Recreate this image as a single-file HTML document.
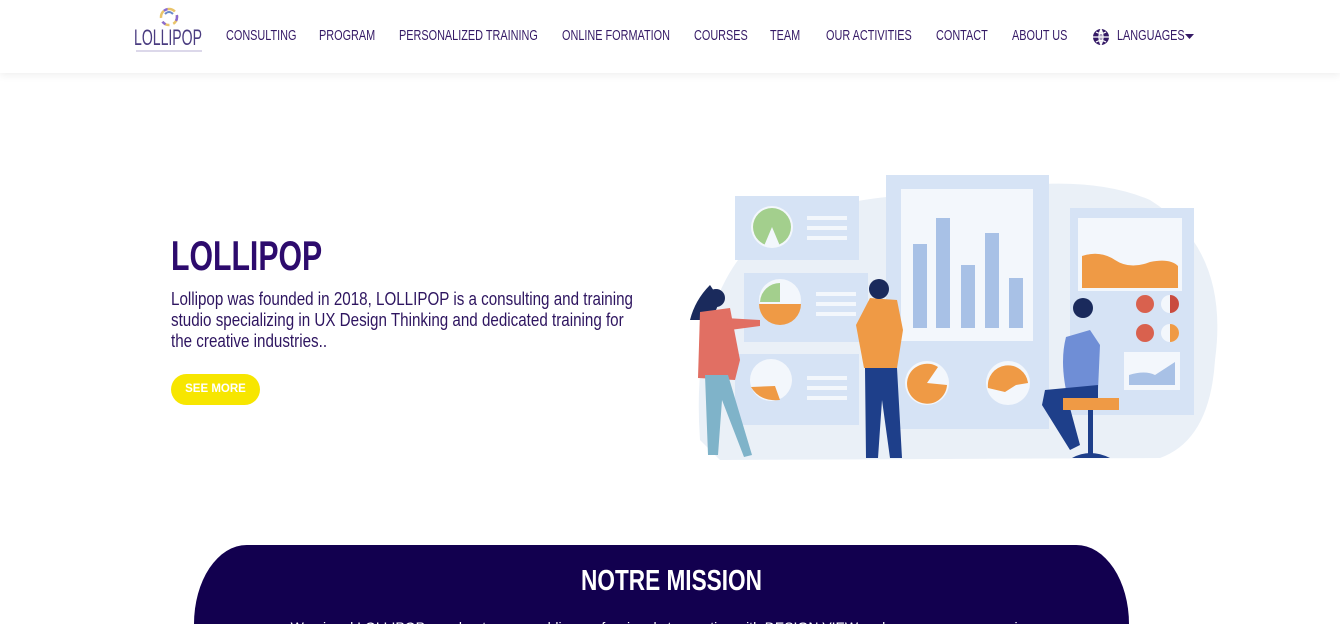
<!DOCTYPE html>
<html><head><meta charset="utf-8"><style>
*{margin:0;padding:0;box-sizing:border-box}
html,body{width:1340px;height:624px;overflow:hidden}
body{background:#fff;font-family:"Liberation Sans",sans-serif;position:relative}
.hdr{position:absolute;left:0;top:0;width:1340px;height:73px;background:#fff;box-shadow:0 2px 8px rgba(0,0,0,0.07);z-index:2}
.nav{position:absolute;top:28px;font-size:14.5px;color:#351a66;white-space:nowrap;transform:scaleX(0.75);transform-origin:0 0}
h1{position:absolute;left:171px;top:232px;font-size:42px;font-weight:bold;color:#2d0b6d;transform:scaleX(0.72);transform-origin:0 0;white-space:nowrap}
p.t{position:absolute;left:171px;top:289px;font-size:18px;line-height:21px;color:#2e1560;white-space:nowrap;transform:scaleX(0.843);transform-origin:0 0}
.btn{position:absolute;left:171px;top:374px;width:89px;height:31px;border-radius:16px;background:#f7e600;color:#fff;font-size:11.5px;font-weight:bold;text-align:center;line-height:31px}
.mis{position:absolute;left:194px;top:545px;width:935px;height:79px;overflow:hidden;background:#12004f;border-top-left-radius:80px 120px;border-top-right-radius:80px 120px}
.mis h2{position:absolute;left:10px;width:100%;text-align:center;top:20px;color:#fff;font-size:29px;font-weight:bold;transform:scaleX(0.78)}
.mis div{position:absolute;left:0;width:100%;text-align:center;top:74px;color:#fff;font-size:14px}
</style></head><body>
<div class="hdr">
 <svg style="position:absolute;left:130px;top:2px" width="80" height="52" viewBox="0 0 80 52">
  <circle cx="39" cy="15" r="8" fill="none" stroke="#e9c46a" stroke-width="2.5" stroke-dasharray="8 4"/>
  <circle cx="39" cy="15" r="8" fill="none" stroke="#8a6bd1" stroke-width="2.5" stroke-dasharray="4 12"/>
  <path d="M35 12 q4 -4 8 0" stroke="#6b8ac9" stroke-width="2" fill="none"/>
  <text x="4" y="43" font-family="Liberation Sans,sans-serif" font-size="22" fill="#4a3c80" textLength="68" lengthAdjust="spacingAndGlyphs">LOLLIPOP</text>
  <line x1="6" y1="49" x2="72" y2="49" stroke="#b9b0d6" stroke-width="1"/>
 </svg>
 <span class="nav" style="left:226px">CONSULTING</span>
 <span class="nav" style="left:319px">PROGRAM</span>
 <span class="nav" style="left:399px">PERSONALIZED TRAINING</span>
 <span class="nav" style="left:562px">ONLINE FORMATION</span>
 <span class="nav" style="left:694px">COURSES</span>
 <span class="nav" style="left:770px">TEAM</span>
 <span class="nav" style="left:826px">OUR ACTIVITIES</span>
 <span class="nav" style="left:936px">CONTACT</span>
 <span class="nav" style="left:1012px">ABOUT US</span>
 <svg style="position:absolute;left:1092px;top:28px" width="18" height="18" viewBox="0 0 18 18"><circle cx="9" cy="9" r="8" fill="#351a66"/><path d="M1 9h16M9 1v16M4 4q5 3 10 0M4 14q5-3 10 0M9 1q-4 8 0 16M9 1q4 8 0 16" stroke="#fff" stroke-width="1.2" fill="none"/></svg>
 <span class="nav" style="left:1117px">LANGUAGES</span>
 <svg style="position:absolute;left:1185px;top:34px" width="10" height="6"><path d="M0 0h9l-4.5 5z" fill="#351a66"/></svg>
</div>

<h1>LOLLIPOP</h1>
<p class="t">Lollipop was founded in 2018, LOLLIPOP is a consulting and training<br>studio specializing in UX Design Thinking and dedicated training for<br>the creative industries..</p>
<div class="btn">SEE MORE</div>

<svg style="position:absolute;left:680px;top:170px" width="540" height="295" viewBox="680 170 540 295">
 <path d="M700 440 Q690 300 760 235 Q840 190 960 195 Q1080 170 1150 200 Q1230 250 1215 360 Q1210 440 1160 458 L720 460 Z" fill="#eaf0f7"/>
 <rect x="886" y="175" width="163" height="254" fill="#d6e3f5"/>
 <rect x="901" y="189" width="132" height="152" fill="#f3f7fc"/>
 <g fill="#a8c1e6"><rect x="913" y="244" width="14" height="84"/><rect x="936" y="218" width="14" height="110"/><rect x="961" y="265" width="14" height="63"/><rect x="985" y="233" width="14" height="95"/><rect x="1009" y="278" width="14" height="50"/></g>
 <rect x="735" y="196" width="124" height="64" fill="#d6e3f5"/>
 <rect x="744" y="273" width="124" height="69" fill="#d6e3f5"/>
 <rect x="735" y="354" width="124" height="71" fill="#d6e3f5"/>
 <g fill="#f3f7fc"><rect x="807" y="216" width="40" height="4"/><rect x="807" y="226" width="40" height="4"/><rect x="807" y="236" width="40" height="4"/>
 <rect x="816" y="292" width="40" height="4"/><rect x="816" y="302" width="40" height="4"/><rect x="816" y="312" width="40" height="4"/>
 <rect x="807" y="376" width="40" height="4"/><rect x="807" y="386" width="40" height="4"/><rect x="807" y="396" width="40" height="4"/></g>
 <circle cx="772" cy="227" r="21" fill="#f3f7fc"/><circle cx="772" cy="227" r="19" fill="#a3cf8d"/><path d="M772 227 L764 246 L780 246Z" fill="#f3f7fc"/>
 <circle cx="780" cy="300" r="21" fill="#f3f7fc"/><path d="M759 304 A21 21 0 0 0 801 304Z" fill="#ef9a45"/><path d="M780 283 A20 20 0 0 0 760 302 L780 302Z" fill="#a3cf8d"/>
 <circle cx="771" cy="380" r="21" fill="#f3f7fc"/><path d="M751 387 L775 386 L780 400 Q760 402 751 387Z" fill="#ef9a45"/>
 <circle cx="927" cy="383" r="22" fill="#f3f7fc"/><path d="M927 383 L947 385 A20 20 0 1 1 938 367Z" fill="#ef9a45"/>
 <circle cx="1008" cy="383" r="22" fill="#f3f7fc"/><path d="M988 388 A20 20 0 1 1 1028 383 L1016 385 L1005 392Z" fill="#ef9a45"/>
 <rect x="1070" y="208" width="124" height="207" fill="#d6e3f5"/>
 <rect x="1078" y="218" width="104" height="73" fill="#f3f7fc"/>
 <path d="M1082 256 Q1100 250 1115 260 Q1130 270 1150 262 Q1170 258 1178 266 L1178 288 L1082 288Z" fill="#ef9a45"/>
 <g fill="#d9614e"><circle cx="1145" cy="304" r="9"/><circle cx="1145" cy="333" r="9"/></g>
 <circle cx="1170" cy="304" r="9" fill="#f3f7fc"/><path d="M1170 295 A9 9 0 0 1 1170 313Z" fill="#c94b3f"/>
 <circle cx="1170" cy="333" r="9" fill="#f3f7fc"/><path d="M1170 324 A9 9 0 0 1 1170 342Z" fill="#ef9a45"/>
 <rect x="1124" y="352" width="56" height="38" fill="#f3f7fc"/><path d="M1129 385 L1129 375 Q1145 370 1155 375 L1175 362 L1175 385Z" fill="#a8c1e6"/>
 <path d="M710 285 Q695 300 690 320 L712 320 L720 300Z" fill="#1a2a5c"/>
 <circle cx="716" cy="298" r="9" fill="#1a2a5c"/>
 <path d="M700 312 L730 308 L740 360 L735 380 L698 378Z" fill="#e16f63"/>
 <path d="M725 318 L760 320 L760 326 L730 330Z" fill="#e16f63"/>
 <path d="M705 375 L728 375 L752 455 L744 457 L722 400 L718 455 L708 455Z" fill="#7fb3c9"/>
 <path d="M870 298 L897 300 L903 330 L897 368 L864 368 L856 325Z" fill="#ef9a45"/>
 <circle cx="879" cy="289" r="10" fill="#1a2a5c"/>
 <path d="M865 368 L897 368 L902 458 L890 458 L882 400 L878 458 L866 458Z" fill="#1e3f8a"/>
 <path d="M1066 337 L1090 330 L1100 345 L1098 390 L1066 390 Q1060 360 1066 337Z" fill="#6f8ed6"/>
 <circle cx="1083" cy="308" r="10" fill="#1a2a5c"/>
 <path d="M1045 390 L1098 385 L1098 400 L1070 408 L1080 445 L1070 450 L1042 405Z" fill="#1e3f8a"/>
 <rect x="1063" y="398" width="56" height="12" fill="#ef9a45"/>
 <rect x="1088" y="410" width="5" height="45" fill="#1e3f8a"/>
 <path d="M1072 458 Q1090 448 1110 458Z" fill="#1e3f8a"/>
</svg>

<div class="mis"><h2>NOTRE MISSION</h2><div>We aimed LOLLIPOP as a bootcamp enabling professionals to practice with DESIGN VIEW and accompany companies</div></div>
</body></html>
